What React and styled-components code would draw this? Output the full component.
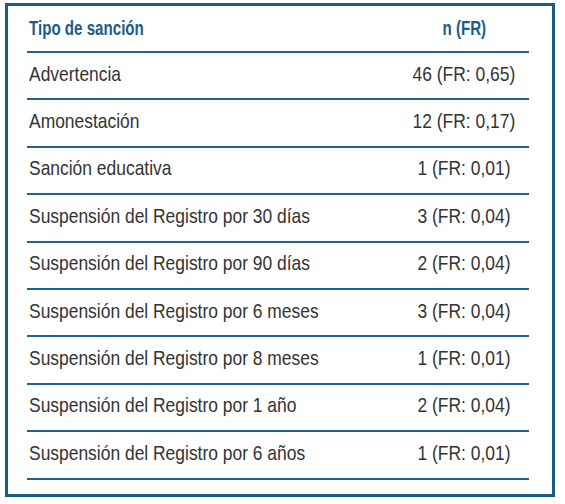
import React from 'react';
import styled, { createGlobalStyle } from 'styled-components';

const GlobalStyle = createGlobalStyle`
  body {
    margin: 0;
    background: #ffffff;
    font-family: "Liberation Sans", Arial, sans-serif;
  }
`;

const Frame = styled.div`
  box-sizing: border-box;
  margin: 3px 0 0 5px;
  width: 550px;
  height: 494px;
  border: 3px solid #1d5b87;
  padding: 0 23px 0 19px;
`;

const Row = styled.div`
  box-sizing: border-box;
  display: grid;
  grid-template-columns: 1fr 130px;
  align-items: center;
  height: ${props => (props.header ? '47px' : '47.4px')};
  padding-bottom: ${props => (props.header ? '1px' : '4px')};
  border-bottom: 2px solid #1f6190;
  font-size: 21px;
  line-height: 24px;
  color: ${props => (props.header ? '#1d5b87' : '#333333')};
  font-weight: ${props => (props.header ? 700 : 400)};
`;

// the source uses a condensed face; squeeze the regular one to the same width
const Text = styled.span`
  display: inline-block;
  white-space: nowrap;
  transform: scaleX(${props => (props.bold ? 0.72 : 0.83)});
  transform-origin: ${props => (props.center ? 'center' : 'left')};
`;

const Label = styled.div`
  padding-left: 2px;
`;

const Value = styled.div`
  text-align: center;
`;

const rows = [
  ['Advertencia', '46 (FR: 0,65)'],
  ['Amonestación', '12 (FR: 0,17)'],
  ['Sanción educativa', '1 (FR: 0,01)'],
  ['Suspensión del Registro por 30 días', '3 (FR: 0,04)'],
  ['Suspensión del Registro por 90 días', '2 (FR: 0,04)'],
  ['Suspensión del Registro por 6 meses', '3 (FR: 0,04)'],
  ['Suspensión del Registro por 8 meses', '1 (FR: 0,01)'],
  ['Suspensión del Registro por 1 año', '2 (FR: 0,04)'],
  ['Suspensión del Registro por 6 años', '1 (FR: 0,01)'],
];

const App = () => (
  <>
    <GlobalStyle />
    <Frame>
      <Row header>
        <Label><Text bold>Tipo de sanción</Text></Label>
        <Value><Text bold center>n (FR)</Text></Value>
      </Row>
      {rows.map(([label, value]) => (
        <Row key={label}>
          <Label><Text>{label}</Text></Label>
          <Value><Text center>{value}</Text></Value>
        </Row>
      ))}
    </Frame>
  </>
);

export default App;
